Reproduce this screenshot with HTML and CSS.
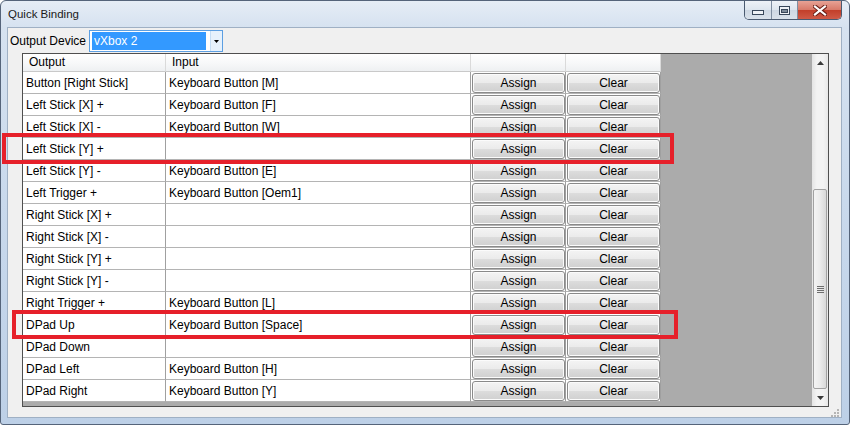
FILE: index.html
```html
<!DOCTYPE html>
<html lang="en">
<head>
    <meta charset="UTF-8">
    <meta name="viewport" content="width=device-width, initial-scale=1.0">
    <title>Quick Binding</title>
    <link rel="stylesheet" href="styles.css">
</head>
<body>
<div class="window">
  <div class="titlebar">
    <span class="title">Quick Binding</span>
    <div class="caption-btns">
      <div class="cap cap-min">
        <svg width="12" height="5" viewBox="0 0 12 5"><rect x="0.5" y="0.5" width="11" height="4" fill="#eef1f5" stroke="#38475a"/></svg>
      </div>
      <div class="cap cap-max">
        <svg width="11" height="9" viewBox="0 0 11 9"><rect x="0.5" y="0.5" width="10" height="8" fill="#eef1f5" stroke="#38475a"/><rect x="2.5" y="3.5" width="6" height="3" fill="#7d8a99" stroke="#38475a"/></svg>
      </div>
      <div class="cap cap-close">
        <svg width="14" height="11" viewBox="0 0 14 11"><path d="M2 1.5 L12 9.5 M12 1.5 L2 9.5" stroke="#6b1e16" stroke-width="4.2" stroke-linecap="square"/><path d="M2 1.5 L12 9.5 M12 1.5 L2 9.5" stroke="#fff" stroke-width="2.2" stroke-linecap="square"/></svg>
      </div>
    </div>
  </div>

  <div class="client">
    <div class="device-row">
      <span class="device-label">Output Device</span>
      <div class="combo">
        <span class="combo-sel">vXbox 2</span>
        <span class="combo-drop">
          <svg width="5" height="3" viewBox="0 0 5 3"><path d="M0 0 H5 L2.5 3 Z" fill="#000"/></svg>
        </span>
      </div>
    </div>

    <div class="grid">
      <div class="grid-body">
        <div class="grid-head">
          <div class="hcell">Output</div>
          <div class="hcell">Input</div>
          <div class="hcell"></div>
          <div class="hcell"></div>
        </div>

        <div class="grid-row">
          <div class="cell">Button [Right Stick]</div>
          <div class="cell">Keyboard Button [M]</div>
          <div class="cell btn-cell"><button class="win-btn">Assign</button></div>
          <div class="cell btn-cell"><button class="win-btn">Clear</button></div>
        </div>
        <div class="grid-row">
          <div class="cell">Left Stick [X] +</div>
          <div class="cell">Keyboard Button [F]</div>
          <div class="cell btn-cell"><button class="win-btn">Assign</button></div>
          <div class="cell btn-cell"><button class="win-btn">Clear</button></div>
        </div>
        <div class="grid-row">
          <div class="cell">Left Stick [X] -</div>
          <div class="cell">Keyboard Button [W]</div>
          <div class="cell btn-cell"><button class="win-btn">Assign</button></div>
          <div class="cell btn-cell"><button class="win-btn">Clear</button></div>
        </div>
        <div class="grid-row">
          <div class="cell">Left Stick [Y] +</div>
          <div class="cell"></div>
          <div class="cell btn-cell"><button class="win-btn">Assign</button></div>
          <div class="cell btn-cell"><button class="win-btn">Clear</button></div>
        </div>
        <div class="grid-row">
          <div class="cell">Left Stick [Y] -</div>
          <div class="cell">Keyboard Button [E]</div>
          <div class="cell btn-cell"><button class="win-btn">Assign</button></div>
          <div class="cell btn-cell"><button class="win-btn">Clear</button></div>
        </div>
        <div class="grid-row">
          <div class="cell">Left Trigger +</div>
          <div class="cell">Keyboard Button [Oem1]</div>
          <div class="cell btn-cell"><button class="win-btn">Assign</button></div>
          <div class="cell btn-cell"><button class="win-btn">Clear</button></div>
        </div>
        <div class="grid-row">
          <div class="cell">Right Stick [X] +</div>
          <div class="cell"></div>
          <div class="cell btn-cell"><button class="win-btn">Assign</button></div>
          <div class="cell btn-cell"><button class="win-btn">Clear</button></div>
        </div>
        <div class="grid-row">
          <div class="cell">Right Stick [X] -</div>
          <div class="cell"></div>
          <div class="cell btn-cell"><button class="win-btn">Assign</button></div>
          <div class="cell btn-cell"><button class="win-btn">Clear</button></div>
        </div>
        <div class="grid-row">
          <div class="cell">Right Stick [Y] +</div>
          <div class="cell"></div>
          <div class="cell btn-cell"><button class="win-btn">Assign</button></div>
          <div class="cell btn-cell"><button class="win-btn">Clear</button></div>
        </div>
        <div class="grid-row">
          <div class="cell">Right Stick [Y] -</div>
          <div class="cell"></div>
          <div class="cell btn-cell"><button class="win-btn">Assign</button></div>
          <div class="cell btn-cell"><button class="win-btn">Clear</button></div>
        </div>
        <div class="grid-row">
          <div class="cell">Right Trigger +</div>
          <div class="cell">Keyboard Button [L]</div>
          <div class="cell btn-cell"><button class="win-btn">Assign</button></div>
          <div class="cell btn-cell"><button class="win-btn">Clear</button></div>
        </div>
        <div class="grid-row">
          <div class="cell">DPad Up</div>
          <div class="cell">Keyboard Button [Space]</div>
          <div class="cell btn-cell"><button class="win-btn">Assign</button></div>
          <div class="cell btn-cell"><button class="win-btn">Clear</button></div>
        </div>
        <div class="grid-row">
          <div class="cell">DPad Down</div>
          <div class="cell"></div>
          <div class="cell btn-cell"><button class="win-btn">Assign</button></div>
          <div class="cell btn-cell"><button class="win-btn">Clear</button></div>
        </div>
        <div class="grid-row">
          <div class="cell">DPad Left</div>
          <div class="cell">Keyboard Button [H]</div>
          <div class="cell btn-cell"><button class="win-btn">Assign</button></div>
          <div class="cell btn-cell"><button class="win-btn">Clear</button></div>
        </div>
        <div class="grid-row">
          <div class="cell">DPad Right</div>
          <div class="cell">Keyboard Button [Y]</div>
          <div class="cell btn-cell"><button class="win-btn">Assign</button></div>
          <div class="cell btn-cell"><button class="win-btn">Clear</button></div>
        </div>
      </div>

      <div class="vscroll">
        <div class="sb-arrow">
          <svg width="7" height="4" viewBox="0 0 7 4"><path d="M0 4 L3.5 0 L7 4 Z" fill="#3a3a3a"/></svg>
        </div>
        <div class="sb-track">
          <div class="sb-thumb">
            <svg width="7" height="7" viewBox="0 0 7 7"><path d="M0 0.5 H7 M0 2.5 H7 M0 4.5 H7 M0 6.5 H7" stroke="#6e6e6e" stroke-width="1"/></svg>
          </div>
        </div>
        <div class="sb-arrow">
          <svg width="7" height="4" viewBox="0 0 7 4"><path d="M0 0 L3.5 4 L7 0 Z" fill="#3a3a3a"/></svg>
        </div>
      </div>
    </div>

    <div class="size-grip">
      <svg width="9" height="9" viewBox="0 0 9 9">
        <rect x="6" y="0" width="2" height="2" fill="#b5b5b5"/>
        <rect x="3" y="3" width="2" height="2" fill="#b5b5b5"/>
        <rect x="6" y="3" width="2" height="2" fill="#b5b5b5"/>
        <rect x="0" y="6" width="2" height="2" fill="#b5b5b5"/>
        <rect x="3" y="6" width="2" height="2" fill="#b5b5b5"/>
        <rect x="6" y="6" width="2" height="2" fill="#b5b5b5"/>
      </svg>
    </div>
  </div>

  <!-- red annotation boxes drawn over the screenshot -->
  <div class="mark mark-1"></div>
  <div class="mark mark-2"></div>
</div>
</body>
</html>
```

FILE: styles.css
```css
body {
  margin: 0;
  overflow: hidden;
  font-family: "Liberation Sans", Arial, sans-serif;
  font-size: 12px;
  color: #000;
  background: #fff;
}

.window {
  position: relative;
  width: 850px;
  height: 425px;
  box-sizing: border-box;
  border: 1px solid #55647a;
  border-radius: 6px 6px 3px 3px;
  padding: 0 7px 6px 6px;
  display: flex;
  flex-direction: column;
  background: linear-gradient(to bottom, #e6edf6 0, #d6e2f0 26px, #c9d9ec 200px, #bdd0e7 100%);
}

.titlebar {
  height: 26px;
  display: flex;
  justify-content: space-between;
  align-items: flex-start;
}

.title {
  font-size: 11.5px;
  color: #1a1a1a;
  padding: 7px 0 0 1px;
}

.caption-btns {
  display: flex;
  height: 18px;
  border: 1px solid #4a5a70;
  border-top: none;
  border-radius: 0 0 5px 5px;
  overflow: hidden;
}

.cap {
  display: flex;
  align-items: center;
  justify-content: center;
}

.cap-min {
  width: 26px;
  border-right: 1px solid #7f8ea1;
  background: linear-gradient(to bottom, #eef2f7, #dde5ee 50%, #cdd7e3 50%, #d9e1ea);
}

.cap-min svg {
  margin-top: 5px;
}

.cap-max {
  width: 25px;
  border-right: 1px solid #7f8ea1;
  background: linear-gradient(to bottom, #eef2f7, #dde5ee 50%, #cdd7e3 50%, #d9e1ea);
}

.cap-close {
  width: 43px;
  background: linear-gradient(to bottom, #e7a295, #d87a6a 48%, #c23f2a 52%, #cf5a47);
}

.client {
  flex: 1;
  box-sizing: border-box;
  border: 1px solid #9fb0c4;
  background: #f0f0f0;
  display: flex;
  flex-direction: column;
}

.device-row {
  display: flex;
  align-items: center;
  margin-top: 2px;
  padding-left: 2px;
}

.device-label {
  width: 79px;
}

.combo {
  width: 134px;
  height: 22px;
  box-sizing: border-box;
  border: 1px solid #5c9fe2;
  background: #fff;
  display: flex;
}

.combo-sel {
  width: 114px;
  margin: 1px 0 1px 2px;
  padding-left: 2px;
  box-sizing: border-box;
  line-height: 18px;
  background: #3399ff;
  color: #fff;
}

.combo-drop {
  width: 11px;
  margin-left: auto;
  border-left: 1px solid #c4ddf5;
  background: #e6f1fc;
  display: flex;
  align-items: center;
  justify-content: center;
}

.grid {
  margin: 1px 0 0 14px;
  width: 807px;
  height: 354px;
  box-sizing: border-box;
  border: 1px solid #4f4f4f;
  background: #ababab;
  display: flex;
}

.grid-body {
  flex: 1;
}

.grid-head,
.grid-row {
  display: grid;
  grid-template-columns: 143px 305px 95px 95px;
  width: 638px;
}

.hcell {
  height: 18px;
  box-sizing: border-box;
  border-right: 1px solid #dadada;
  border-bottom: 1px solid #c9c9c9;
  background: linear-gradient(to bottom, #ffffff, #f6f7f8 60%, #eef0f2);
  padding-left: 6px;
  line-height: 17px;
}

.cell {
  height: 22px;
  box-sizing: border-box;
  border-right: 1px solid #a0a0a0;
  border-bottom: 1px solid #b4b4b4;
  background: #fff;
  padding-left: 3px;
  display: flex;
  align-items: center;
  white-space: nowrap;
}

.btn-cell {
  padding: 1px 0 0 1px;
  align-items: flex-start;
}

.win-btn {
  width: 93px;
  height: 20px;
  padding: 0;
  font-family: "Liberation Sans", Arial, sans-serif;
  font-size: 12px;
  color: #000;
  border: 1px solid #8a8a8a;
  border-radius: 3px;
  background: linear-gradient(to bottom, #f4f4f4, #ebebeb 48%, #dcdcdc 52%, #d0d0d0);
  box-shadow: inset 0 0 0 1px #fbfbfb;
}

.vscroll {
  width: 16px;
  display: flex;
  flex-direction: column;
  background: linear-gradient(to right, #e4e4e4, #f3f3f3 30%, #f3f3f3 70%, #e8e8e8);
}

.sb-arrow {
  height: 17px;
  display: flex;
  align-items: center;
  justify-content: center;
}

.sb-track {
  flex: 1;
  display: flex;
  flex-direction: column;
  justify-content: flex-end;
}

.sb-thumb {
  height: 200px;
  margin: 0 1px;
  box-sizing: border-box;
  border: 1px solid #a2a2a2;
  border-radius: 2px;
  background: linear-gradient(to right, #f4f4f4, #ebebeb 50%, #d9d9d9);
  display: flex;
  align-items: center;
  justify-content: center;
}

.size-grip {
  margin-top: auto;
  align-self: flex-end;
  width: 9px;
  height: 9px;
  margin-right: 1px;
  margin-bottom: 1px;
}

.mark {
  position: absolute;
  box-sizing: border-box;
  border: 4px solid #e6202a;
}

.mark-1 {
  left: 1px;
  top: 132px;
  width: 672px;
  height: 31px;
}

.mark-2 {
  left: 11px;
  top: 309px;
  width: 666px;
  height: 29px;
}
```
